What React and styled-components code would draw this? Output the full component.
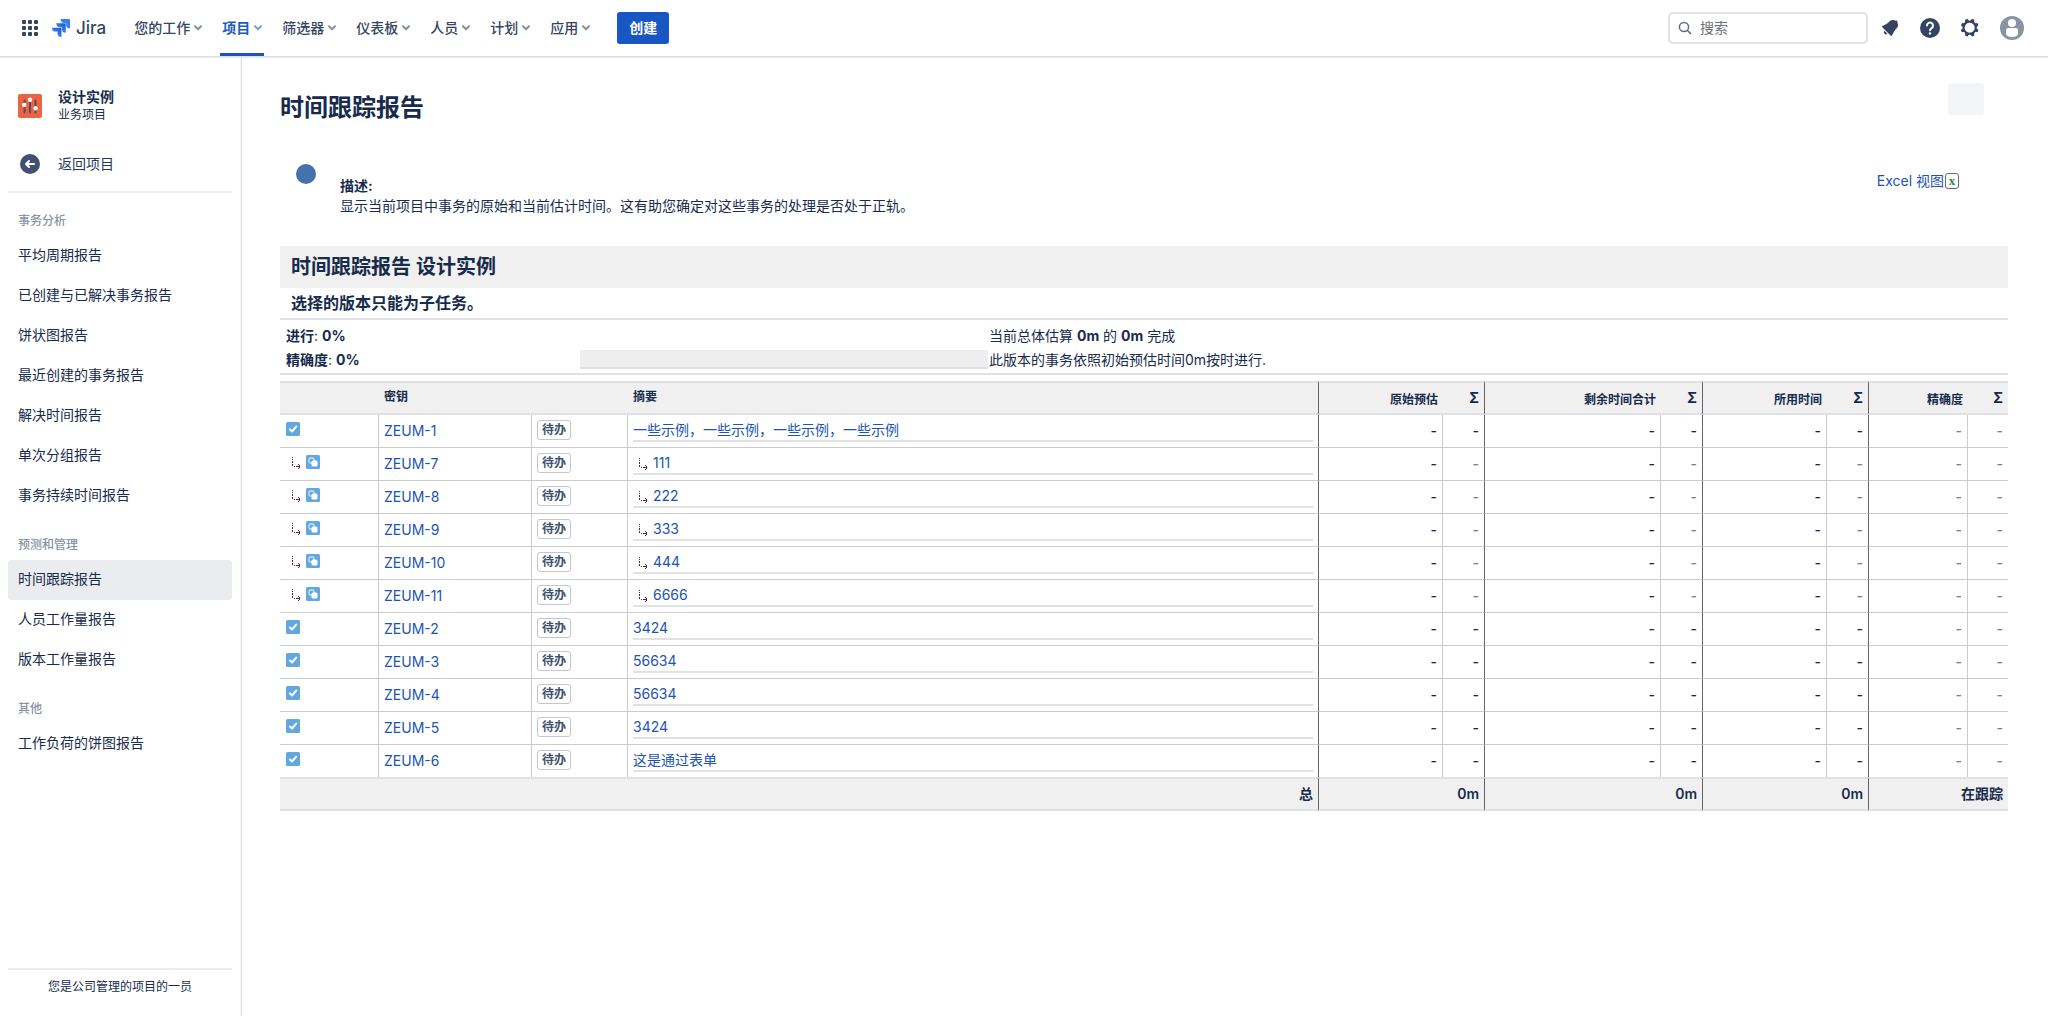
import React from "react";
import styled, { createGlobalStyle } from "styled-components";

const GlobalStyle = createGlobalStyle`
  *, *::before, *::after {
    box-sizing: border-box;
  }

  body {
    margin: 0;
    background: #fff;
    color: #172b4d;
    font-family: Inter, "Noto Sans CJK SC", "Noto Sans", sans-serif;
    font-size: 14px;
    line-height: 20px;
  }

  h1, h2, h3, p, ul {
    margin: 0;
    padding: 0;
  }

  a {
    color: #1c54b2;
    text-decoration: none;
  }

  button, input {
    font: inherit;
  }

  svg {
    display: block;
    flex: none;
  }
`;

const menus = ["您的工作", "项目", "筛选器", "仪表板", "人员", "计划", "应用"];

const groups = [
  {
    title: "事务分析",
    items: [
      "平均周期报告",
      "已创建与已解决事务报告",
      "饼状图报告",
      "最近创建的事务报告",
      "解决时间报告",
      "单次分组报告",
      "事务持续时间报告",
    ],
  },
  {
    title: "预测和管理",
    items: ["时间跟踪报告", "人员工作量报告", "版本工作量报告"],
  },
  { title: "其他", items: ["工作负荷的饼图报告"] },
];

const issues = [
  { id: "ZEUM-1", summary: "一些示例，一些示例，一些示例，一些示例" },
  { id: "ZEUM-7", summary: "111", sub: true },
  { id: "ZEUM-8", summary: "222", sub: true },
  { id: "ZEUM-9", summary: "333", sub: true },
  { id: "ZEUM-10", summary: "444", sub: true },
  { id: "ZEUM-11", summary: "6666", sub: true },
  { id: "ZEUM-2", summary: "3424" },
  { id: "ZEUM-3", summary: "56634" },
  { id: "ZEUM-4", summary: "56634" },
  { id: "ZEUM-5", summary: "3424" },
  { id: "ZEUM-6", summary: "这是通过表单" },
];

const measures = ["原始预估", "剩余时间合计", "所用时间", "精确度"];

const SwitcherIcon = () => (
  <svg width="16" height="16" viewBox="0 0 16 16" fill="#344563">
    {[0, 6, 12].map(y =>
      [0, 6, 12].map(x => (
        <rect key={`${x}-${y}`} x={x} y={y} width="4" height="4" rx="1" />
      ))
    )}
  </svg>
);

const JiraMark = () => (
  <svg width="18" height="18" viewBox="0 0 24 24">
    <defs>
      <linearGradient id="jiraFade" x1="1" y1="0" x2="0.3" y2="0.8">
        <stop offset="0.2" stopColor="#1f5fd0" />
        <stop offset="1" stopColor="#3f8bff" />
      </linearGradient>
    </defs>
    <path fill="url(#jiraFade)" d="M11.571 11.513H0a5.218 5.218 0 0 0 5.232 5.215h2.13v2.057A5.215 5.215 0 0 0 12.575 24V12.518a1.005 1.005 0 0 0-1.005-1.005z" />
    <path fill="url(#jiraFade)" d="M17.294 5.757H5.736a5.215 5.215 0 0 0 5.215 5.214h2.129v2.058a5.218 5.218 0 0 0 5.215 5.214V6.758a1.001 1.001 0 0 0-1.001-1.001z" />
    <path fill="#3580f5" d="M23.013 0H11.455a5.215 5.215 0 0 0 5.215 5.215h2.129v2.057A5.215 5.215 0 0 0 24 12.483V1.005A1.001 1.001 0 0 0 23.013 0Z" />
  </svg>
);

const Chevron = () => (
  <svg width="8" height="6" viewBox="0 0 8 6" fill="none" stroke="currentColor" strokeWidth="2" strokeLinecap="round" strokeLinejoin="round">
    <path d="M1 1.200L4 4.200L7 1.200" />
  </svg>
);

const SearchIcon = () => (
  <svg width="14" height="14" viewBox="0 0 14 14" fill="none" stroke="#5a6f91" strokeWidth="1.500" strokeLinecap="round">
    <circle cx="6" cy="6" r="4.600" />
    <path d="M9.500 9.500L12.600 12.600" />
  </svg>
);

const BellIcon = () => (
  <svg width="24" height="24" viewBox="0 0 24 24" fill="#344563">
    <path fillRule="evenodd" d="M6.485 17.669a2 2 0 002.829 0l-2.829-2.83a2 2 0 000 2.83zm4.897-12.191l-.725.725c-.782.782-2.21 1.813-3.206 2.311l-3.017 1.509c-.495.248-.584.774-.187 1.171l8.556 8.556c.398.396.922.313 1.171-.188l1.51-3.016c.494-.988 1.526-2.42 2.311-3.206l.725-.726a5.048 5.048 0 00.64-6.356 1.01 1.01 0 10-1.354-1.494c-.023.025-.046.049-.066.075a5.043 5.043 0 00-2.788-.84 5.036 5.036 0 00-3.57 1.478z" />
  </svg>
);

const HelpIcon = () => (
  <svg width="24" height="24" viewBox="0 0 24 24">
    <circle cx="12" cy="12" r="10" fill="#344563" />
    <path d="M9 9.600a3 3 0 1 1 4.600 2.500c-1 .650-1.600 1.100-1.600 2.100" fill="none" stroke="#fff" strokeWidth="2" strokeLinecap="round" />
    <circle cx="12" cy="17.400" r="1.200" fill="#fff" />
  </svg>
);

const SettingsIcon = () => (
  <svg width="24" height="24" viewBox="0 0 24 24" fill="#344563">
    <path fillRule="evenodd" d="M11.701 16.7a5.002 5.002 0 110-10.003 5.002 5.002 0 010 10.004m8.368-3.117a1.995 1.995 0 01-1.346-1.885c0-.876.563-1.613 1.345-1.885a.48.48 0 00.315-.574 8.947 8.947 0 00-.836-1.993.477.477 0 00-.598-.195 2.04 2.04 0 01-1.29.08 1.988 1.988 0 01-1.404-1.395 2.04 2.04 0 01.076-1.297.478.478 0 00-.196-.597 8.98 8.98 0 00-1.975-.826.479.479 0 00-.574.314 1.995 1.995 0 01-1.885 1.346 1.994 1.994 0 01-1.884-1.345.482.482 0 00-.575-.315c-.708.2-1.379.485-2.004.842a.47.47 0 00-.198.582A2.002 2.002 0 014.445 7.06a.478.478 0 00-.595.196 8.946 8.946 0 00-.833 1.994.48.48 0 00.308.572 1.995 1.995 0 011.323 1.877c0 .867-.552 1.599-1.324 1.877a.479.479 0 00-.308.57 8.99 8.99 0 00.723 1.79.477.477 0 00.624.194c.595-.273 1.343-.264 2.104.238.117.077.225.185.302.3.527.8.512 1.58.198 2.188a.473.473 0 00.168.628 8.946 8.946 0 002.11.897.474.474 0 00.57-.313 1.995 1.995 0 011.886-1.353c.878 0 1.618.567 1.887 1.353a.475.475 0 00.57.313 8.964 8.964 0 002.084-.883.473.473 0 00.167-.631c-.318-.608-.337-1.393.191-2.195.077-.116.185-.225.302-.302.772-.511 1.527-.513 2.125-.23a.477.477 0 00.628-.19 8.925 8.925 0 00.728-1.793.478.478 0 00-.314-.573" />
  </svg>
);

const AvatarIcon = () => (
  <svg width="24" height="24" viewBox="0 0 24 24">
    <circle cx="12" cy="12" r="12" fill="#8993a4" />
    <circle cx="12" cy="7" r="4" fill="#fff" />
    <path d="M6 14.500a2.500 2.500 0 0 1 2.500-2.500h7a2.500 2.500 0 0 1 2.500 2.500v3c0 2-2.700 3.500-6 3.500s-6-1.500-6-3.500z" fill="#fff" />
  </svg>
);

const ProjectIcon = () => (
  <svg width="24" height="24" viewBox="0 0 24 24">
    <rect width="24" height="24" rx="2" fill="#ea6442" />
    <g stroke="#5e4a5c" strokeWidth="2" strokeLinecap="round">
      <path d="M6.500 6.500v12M12 6v12.500M17.500 6.500v12" />
    </g>
    <g fill="#fff">
      <circle cx="6.200" cy="11" r="2.200" />
      <circle cx="12" cy="5.800" r="2.200" />
      <circle cx="17.600" cy="14.200" r="2.200" />
    </g>
  </svg>
);

const BackIcon = () => (
  <svg width="20" height="20" viewBox="0 0 20 20">
    <circle cx="10" cy="10" r="10" fill="#42526e" />
    <path d="M14 10H6.500M9 7L6 10L9 13" fill="none" stroke="#fff" strokeWidth="2" strokeLinecap="round" strokeLinejoin="round" />
  </svg>
);

const TaskIcon = () => (
  <svg width="14" height="14" viewBox="0 0 14 14">
    <rect width="14" height="14" rx="1.500" fill="#62a8de" />
    <path d="M4 7.500L6 9.500L10.200 4.600" fill="none" stroke="#fff" strokeWidth="2" strokeLinecap="round" strokeLinejoin="round" />
  </svg>
);

const SubtaskIcon = () => (
  <svg width="14" height="14" viewBox="0 0 14 14">
    <rect width="14" height="14" rx="1.500" fill="#62a8de" />
    <rect x="3" y="3" width="5" height="5" rx="1.500" fill="none" stroke="#c9e2f5" strokeWidth="1.300" />
    <rect x="5.500" y="5.500" width="6" height="6" rx="1.500" fill="#fff" />
  </svg>
);

const BranchIcon = () => (
  <svg width="9" height="13" viewBox="0 0 9 13" fill="#6b1f1a" shapeRendering="crispEdges">
    <path d="M0 1h1v1H0zM0 3h1v1H0zM0 5h1v2H0zM0 8h1v2H0zM2 10h1v1H2zM4 10h1v1H4zM5 10h3v1H5zM6 8h1v1H6zM7 9h1v1H7zM6 12h1v1H6zM7 11h1v1H7z" />
  </svg>
);

export default function App() {
  return (
    <Page>
      <GlobalStyle />
      <Header>
        <SwitcherIcon />
        <Logo href="#">
          <JiraMark />
          Jira
        </Logo>
        <Menu>
          {menus.map(name => (
            <MenuButton key={name} $active={name === "项目"}>
              {name}
              <Chevron />
            </MenuButton>
          ))}
        </Menu>
        <CreateButton>创建</CreateButton>
        <Search>
          <SearchIcon />
          <SearchInput type="text" placeholder="搜索" aria-label="搜索" />
        </Search>
        <Tools>
          <IconButton aria-label="通知"><BellIcon /></IconButton>
          <IconButton aria-label="帮助"><HelpIcon /></IconButton>
          <IconButton aria-label="设置"><SettingsIcon /></IconButton>
        </Tools>
        <IconButton aria-label="个人资料"><AvatarIcon /></IconButton>
      </Header>

      <Body>
        <Sidebar>
          <Project>
            <ProjectIcon />
            <div>
              <ProjectName>设计实例</ProjectName>
              <ProjectType>业务项目</ProjectType>
            </div>
          </Project>
          <BackLink href="#">
            <BackIcon />
            返回项目
          </BackLink>
          <SideRule />
          {groups.map(group => (
            <Group key={group.title}>
              <GroupTitle>{group.title}</GroupTitle>
              {group.items.map(item => (
                <SideLink key={item} href="#" $active={item === "时间跟踪报告"}>
                  {item}
                </SideLink>
              ))}
            </Group>
          ))}
          <SideFooter>您是公司管理的项目的一员</SideFooter>
        </Sidebar>

        <Main>
          <TitleRow>
            <Title>时间跟踪报告</Title>
            <MoreButton aria-label="更多" />
          </TitleRow>

          <Intro>
            <Dot />
            <IntroText>
              <strong>描述:</strong>
              <p>显示当前项目中事务的原始和当前估计时间。这有助您确定对这些事务的处理是否处于正轨。</p>
            </IntroText>
            <ExcelLink href="#">
              Excel 视图<ExcelBadge>x</ExcelBadge>
            </ExcelLink>
          </Intro>

          <ReportTitle>时间跟踪报告 设计实例</ReportTitle>
          <ReportNote>选择的版本只能为子任务。</ReportNote>

          <Progress>
            <ProgressLabel><b>进行</b>: <b>0%</b></ProgressLabel>
            <span />
            <span>当前总体估算 <b>0m</b> 的 <b>0m</b> 完成</span>
            <ProgressLabel><b>精确度</b>: <b>0%</b></ProgressLabel>
            <ProgressTrack />
            <span>此版本的事务依照初始预估时间0m按时进行.</span>
          </Progress>

          <Table>
            <colgroup>
              <Col $w={99} />
              <Col $w={153} />
              <Col $w={96} />
              <Col />
              <Col $w={124} />
              <Col $w={42} />
              <Col $w={176} />
              <Col $w={42} />
              <Col $w={124} />
              <Col $w={42} />
              <Col $w={99} />
              <Col $w={40} />
            </colgroup>
            <thead>
              <tr>
                <HeadCell />
                <HeadCell>密钥</HeadCell>
                <HeadCell />
                <HeadCell $edge>摘要</HeadCell>
                {measures.map((name, i) => (
                  <React.Fragment key={name}>
                    <HeadCell $right>{name}</HeadCell>
                    <SumHead $edge={i < 3}>Σ</SumHead>
                  </React.Fragment>
                ))}
              </tr>
            </thead>
            <tbody>
              {issues.map(issue => (
                <tr key={issue.id}>
                  <Cell>
                    <TypeIcons $sub={issue.sub}>
                      {issue.sub && <BranchIcon />}
                      {issue.sub ? <SubtaskIcon /> : <TaskIcon />}
                    </TypeIcons>
                  </Cell>
                  <Cell><a href="#">{issue.id}</a></Cell>
                  <Cell><Status>待办</Status></Cell>
                  <Cell $edge>
                    <Summary $sub={issue.sub}>
                      {issue.sub && <BranchIcon />}
                      <a href="#">{issue.summary}</a>
                    </Summary>
                  </Cell>
                  {measures.map((name, i) => (
                    <React.Fragment key={name}>
                      <NumberCell $muted={i === 3}>-</NumberCell>
                      <NumberCell $edge={i < 3} $last={i === 3} $muted={i === 3 || issue.sub}>-</NumberCell>
                    </React.Fragment>
                  ))}
                </tr>
              ))}
            </tbody>
            <tfoot>
              <tr>
                <TotalCell colSpan={4} $edge>总</TotalCell>
                <TotalCell colSpan={2} $edge>0m</TotalCell>
                <TotalCell colSpan={2} $edge>0m</TotalCell>
                <TotalCell colSpan={2} $edge>0m</TotalCell>
                <TotalCell colSpan={2}>在跟踪</TotalCell>
              </tr>
            </tfoot>
          </Table>
        </Main>
      </Body>
    </Page>
  );
}

const Page = styled.div`
  display: flex;
  flex-direction: column;
  min-height: 100vh;
`

const Header = styled.header`
  display: flex;
  align-items: center;
  height: 57px;
  padding: 0 24px 0 22px;
  border-bottom: 1px solid #dcdee6;
  box-shadow: 0 1px 1px #ededf2;
`

const Logo = styled.a`
  display: flex;
  align-items: center;
  gap: 6px;
  margin: 0 26px 0 14px;
  color: #344563;
  font-size: 17px;
  font-weight: 500;
`

const Menu = styled.nav`
  display: flex;
  align-self: stretch;
  gap: 16px;
`

const MenuButton = styled.button`
  display: flex;
  align-items: center;
  gap: 4px;
  padding: 3px 2px 0;
  border: 0;
  border-bottom: 3px solid ${props => (props.$active ? "#1d54b8" : "transparent")};
  background: none;
  color: ${props => (props.$active ? "#1d5bc0" : "#344563")};
  font-weight: ${props => (props.$active ? 600 : 500)};
  white-space: nowrap;

  svg {
    opacity: 0.6;
  }
`

const CreateButton = styled.button`
  height: 32px;
  margin-left: 25px;
  padding: 0 12px;
  border: 0;
  border-radius: 3px;
  background: #1856c4;
  color: #fff;
  font-weight: 600;
  white-space: nowrap;
`

const Search = styled.label`
  display: flex;
  align-items: center;
  gap: 8px;
  width: 200px;
  height: 32px;
  margin-left: auto;
  padding: 0 8px;
  border: 2px solid #dfe1e6;
  border-radius: 5px;
`

const SearchInput = styled.input`
  flex: 1;
  min-width: 0;
  padding: 0;
  border: 0;
  outline: 0;
  background: none;

  &::placeholder {
    color: #6b6f76;
    opacity: 1;
  }
`

const Tools = styled.div`
  display: flex;
  gap: 16px;
  margin: 0 18px 0 10px;
`

const IconButton = styled.button`
  padding: 0;
  border: 0;
  background: none;
`

const Body = styled.div`
  display: flex;
  flex: 1;
`

const Sidebar = styled.aside`
  display: flex;
  flex: none;
  flex-direction: column;
  width: 242px;
  padding: 31px 9px 0 8px;
  border-right: 1px solid #dfe1e6;
  box-shadow: inset -1px 0 0 #f6f6f8;
`

const Project = styled.div`
  display: flex;
  align-items: center;
  gap: 16px;
  padding-left: 10px;
  line-height: 18px;
`

const ProjectName = styled.div`
  font-weight: 600;
`

const ProjectType = styled.div`
  font-size: 12px;
`

const BackLink = styled.a`
  display: flex;
  align-items: center;
  gap: 18px;
  height: 40px;
  margin-top: 20px;
  padding-left: 12px;
  color: #253858;
`

const SideRule = styled.div`
  height: 2px;
  margin-top: 7px;
  background: #ebecf0;
`

const Group = styled.nav`
  margin-top: 20px;
  padding-bottom: 1px;
`

const GroupTitle = styled.h3`
  margin-bottom: 7px;
  padding-left: 10px;
  color: #8993a4;
  font-size: 12px;
  font-weight: 500;
  line-height: 16px;
`

const SideLink = styled.a`
  display: flex;
  align-items: center;
  height: 40px;
  padding: 0 10px 2px;
  border-radius: 3px;
  background: ${props => (props.$active ? "#ebecf0" : "none")};
  color: #172b4d;
`

const SideFooter = styled.div`
  margin-top: auto;
  padding: 9px 0 21px;
  border-top: 2px solid #ebecf0;
  font-size: 12px;
  line-height: 16px;
  text-align: center;
`

const Main = styled.main`
  flex: 1;
  min-width: 0;
  padding: 26px 40px 40px 38px;
`

const TitleRow = styled.div`
  display: flex;
  align-items: flex-start;
  justify-content: space-between;
  padding-right: 24px;
`

const Title = styled.h1`
  padding-top: 11px;
  font-size: 24px;
  font-weight: 600;
  line-height: 28px;
`

const MoreButton = styled.button`
  width: 36px;
  height: 32px;
  border: 0;
  border-radius: 3px;
  background: #f4f5f7;
`

const Intro = styled.section`
  display: flex;
  align-items: flex-start;
  margin: 42px 49px 30px 16px;
`

const Dot = styled.div`
  width: 20px;
  height: 20px;
  border-radius: 50%;
  background: #4472aa;
`

const IntroText = styled.div`
  flex: 1;
  margin: 12px 24px 0;
`

const ExcelLink = styled.a`
  display: flex;
  align-items: center;
  gap: 1px;
  margin-top: 7px;
`

const ExcelBadge = styled.span`
  width: 14px;
  height: 16px;
  border: 1px solid #6b6b6b;
  border-radius: 3px;
  color: #2f8a2f;
  font-family: "Liberation Serif", serif;
  font-size: 13px;
  font-weight: 700;
  line-height: 13px;
  text-align: center;
`

const ReportTitle = styled.h2`
  padding: 0 11px;
  background: #f0f0f0;
  font-size: 20px;
  font-weight: 600;
  line-height: 42px;
`

const ReportNote = styled.h3`
  padding: 0 11px;
  border-bottom: 2px solid #dfe1e6;
  font-size: 16px;
  font-weight: 600;
  line-height: 30px;
`

const Progress = styled.section`
  display: grid;
  grid-template-columns: 299fr 408fr 1019fr;
  column-gap: 1px;
  margin-bottom: 6px;
  padding: 4px 0 1px;
  border-bottom: 2px solid #dfe1e6;
  line-height: 24px;
`

const ProgressLabel = styled.span`
  padding-left: 6px;
`

const ProgressTrack = styled.div`
  height: 19px;
  margin-top: 2px;
  border-bottom: 2px solid #dfe1e6;
  background: #eee;
`

const Table = styled.table`
  width: 100%;
  border-spacing: 0;
  table-layout: fixed;
`

const Col = styled.col`
  width: ${props => (props.$w ? `${props.$w}px` : "auto")};
`

const HeadCell = styled.th`
  height: 34px;
  padding: ${props => (props.$right ? "3px 5px 0" : "0 5px 3px")};
  border: solid #dfe1e6;
  border-width: 2px 0;
  border-right: ${props => (props.$edge ? "1px solid #666" : "0")};
  background: #f0f0f0;
  font-size: 12px;
  font-weight: 600;
  text-align: ${props => (props.$right ? "right" : "left")};
`

const SumHead = styled(HeadCell)`
  padding: 0 5px;
  font-size: 14px;
  font-weight: 700;
  text-align: right;
`

const Cell = styled.td`
  height: 33px;
  padding: 0 5px;
  border-right: 1px solid ${props => (props.$edge ? "#666" : "#ccc")};
  border-bottom: 1px solid #ccc;

  tr:last-child > & {
    height: 32px;
    border-bottom: 0;
  }
`

const NumberCell = styled(Cell)`
  border-right-width: ${props => (props.$last ? "0" : "1px")};
  color: ${props => (props.$muted ? "#808080" : "#172b4d")};
  font-weight: 500;
  text-align: right;
`

const TotalCell = styled.td`
  height: 34px;
  padding: 0 5px;
  border: solid #dfe1e6;
  border-width: 2px 0;
  border-right: ${props => (props.$edge ? "1px solid #666" : "0")};
  background: #f0f0f0;
  font-weight: 600;
  text-align: right;
`

const TypeIcons = styled.div`
  display: flex;
  align-items: flex-start;
  gap: 5px;
  padding: 0 1px 4px ${props => (props.$sub ? "7px" : "1px")};

  svg:first-child:not(:last-child) {
    margin-top: 1px;
  }
`

const Status = styled.span`
  display: block;
  width: max-content;
  padding: 0 4px;
  border: 1px solid #c1c7d0;
  border-radius: 3px;
  color: #42526e;
  font-size: 12px;
  font-weight: 600;
  line-height: 18px;
  margin-bottom: 2px;
`

const Summary = styled.div`
  display: flex;
  align-items: center;
  gap: 5px;
  padding-left: ${props => (props.$sub ? "6px" : "0")};
  border-bottom: 2px solid #dfe1e6;
`
